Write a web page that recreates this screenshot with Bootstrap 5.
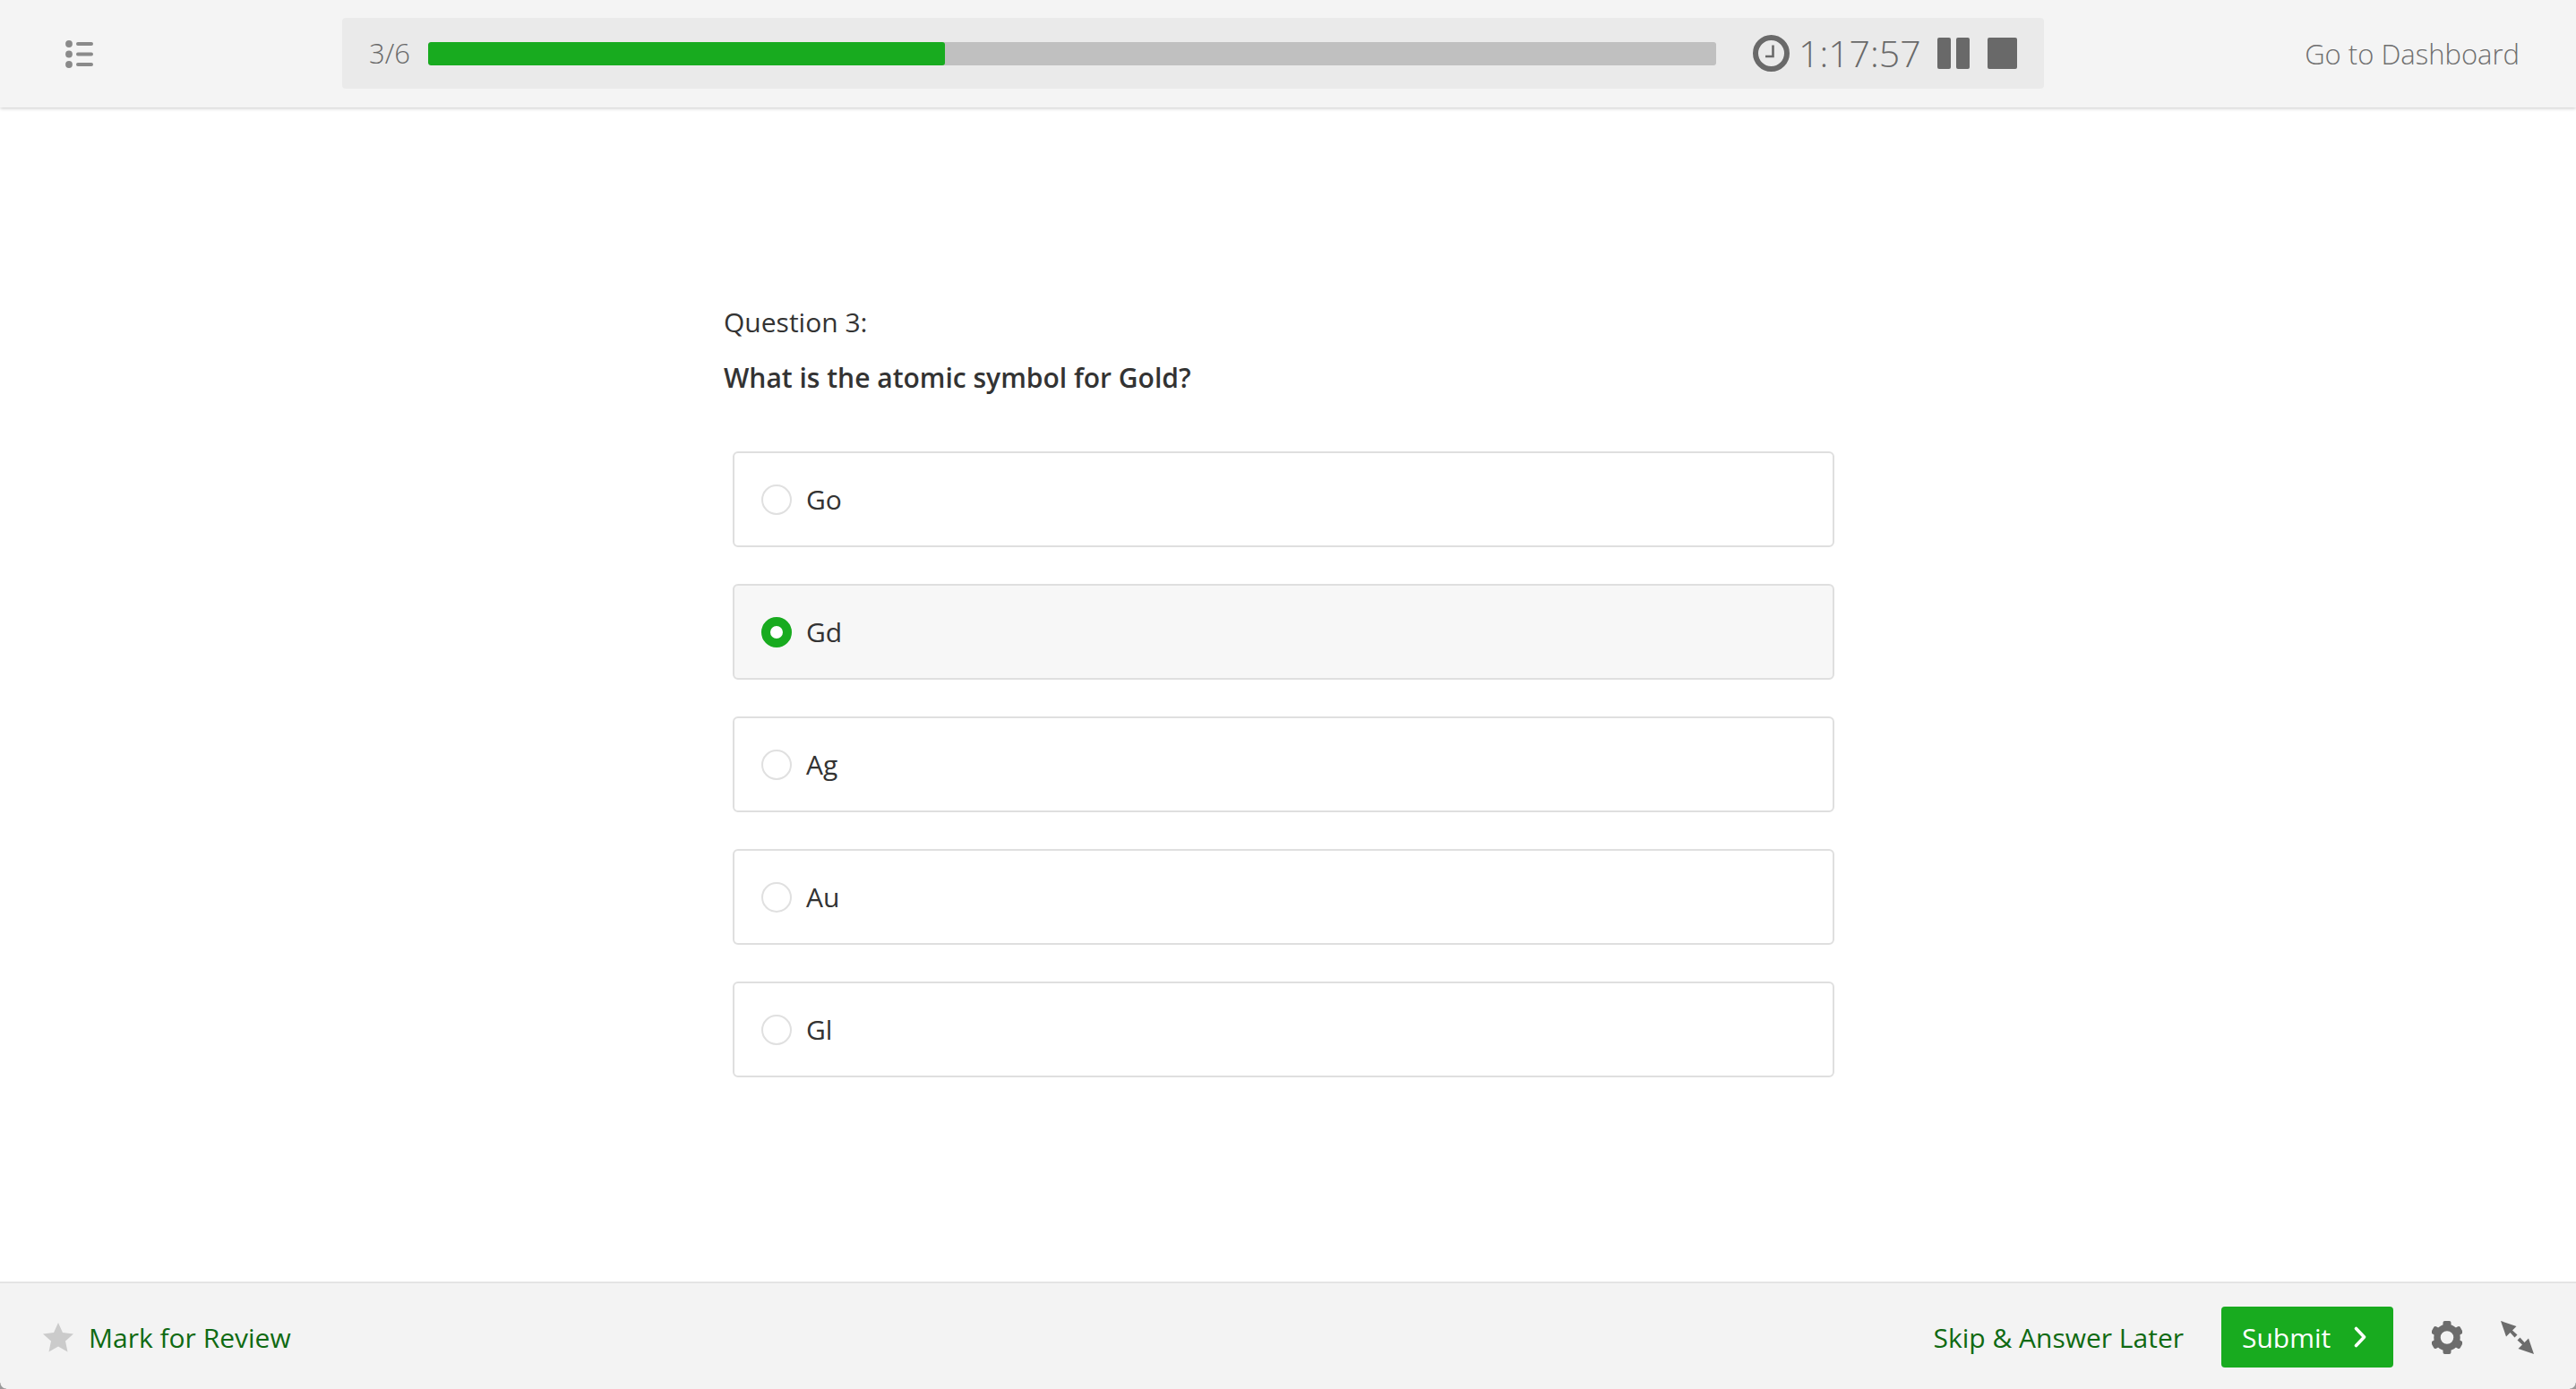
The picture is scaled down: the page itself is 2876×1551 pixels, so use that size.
<!DOCTYPE html>
<html lang="en"><head><meta charset="utf-8"><title>Quiz</title>
<link href="https://cdn.jsdelivr.net/npm/bootstrap@5.3.0/dist/css/bootstrap.min.css" rel="stylesheet">
<style>
html,body{height:100%;margin:0}
body{font-family:"Open Sans",sans-serif;color:#333;background:#fff;font-size:30px;overflow:hidden}
.shell{height:1551px}
.topbar{height:120px;background:#f4f4f4;box-shadow:0 1px 4px rgba(0,0,0,.22);padding:0 63px 0 73px;flex:none;position:relative}
.menu-ic{width:31px;height:31px;fill:#8a8a8a}
.stat-panel{position:absolute;left:382px;top:20px;width:1900px;height:79px;background:#eaeaea;border-radius:4px;padding:0 30px;color:#696969}
.count{font-size:31px;font-weight:300;width:66px;flex:none}
.track{width:1438px;height:26px;background:#c0c0c0;border-radius:3px;overflow:hidden;flex:none}
.fill{height:100%;background:#18ab1f;border-radius:3px}
.clock{width:41px;height:41px;margin-left:41px;flex:none}
.time{font-size:41px;font-weight:300;line-height:1;margin-left:10px;flex:none}
.pause{display:flex;gap:6px;margin-left:18px}
.pause i{display:block;width:15px;height:35px;background:#696969;border-radius:2px}
.stop{display:block;width:35px;height:35px;background:#696969;border-radius:2px;margin-left:20px}
.dash{font-size:31px;font-weight:300;color:#6f6f6f;text-decoration:none}
.content{flex:1 1 auto;padding:220px 0 0 808px}
.q-num{font-size:30px;line-height:40px;margin:0 0 21px;font-weight:400}
.q-text{font-size:30px;line-height:41px;margin:0 0 62px;font-weight:600}
.opts{width:1230px;margin-left:10px;display:flex;flex-direction:column;gap:41px}
.opt{height:107px;border:2px solid #dfdfdf;border-radius:6px;background:#fff;padding:0 0 0 30px;display:flex;align-items:center;gap:16px;font-size:30px}
.opt.sel{background:#f7f7f7}
.dot{width:34px;height:34px;border-radius:50%;border:2px solid #e0e0e0;background:#fff;flex:none}
.sel .dot{border:10px solid #18ab1f}
.footbar{height:120px;background:#f3f3f3;border-top:2px solid #e4e4e4;padding:2px 47px 0 48px;flex:none;position:relative}
.footbar::before,.footbar::after{content:"";position:absolute;bottom:0;width:7px;height:7px}
.footbar::before{left:0;background:radial-gradient(circle at 100% 0,transparent 6px,#9a9a9a 7px)}
.footbar::after{right:0;background:radial-gradient(circle at 0 0,transparent 6px,#9a9a9a 7px)}
.flink{font-size:30px;color:#0f6a12;text-decoration:none}
.star{width:34px;height:33px;fill:#cbcbcb;margin-right:17px}
.go{background:#18ab1f;color:#fff;border:0;border-radius:4px;height:68px;width:192px;font-size:30px;margin-left:42px;padding:0 0 0 23px}
.go:hover{background:#18ab1f;color:#fff}
.chev{margin-left:26px}
.gear{margin-left:43px;fill:#6c6c6c;flex:none}
.arrows{margin-left:43px;fill:#6c6c6c;flex:none}
</style></head>
<body>
<div class="shell d-flex flex-column">
<header class="topbar d-flex align-items-center justify-content-between">
<svg class="menu-ic" viewBox="0 0 31 31"><circle cx="4" cy="4" r="3.900"/><circle cx="4" cy="15.500" r="3.900"/><circle cx="4" cy="27" r="3.900"/><rect x="12" y="2" width="19" height="4" rx="2"/><rect x="12" y="13.500" width="19" height="4" rx="2"/><rect x="12" y="25" width="19" height="4" rx="2"/></svg>
<div class="stat-panel d-flex align-items-center">
<span class="count">3/6</span>
<div class="track"><div class="fill" style="width:40.1%"></div></div>
<svg class="clock" viewBox="0 0 41 41"><circle cx="20.500" cy="20.500" r="17.500" fill="none" stroke="#696969" stroke-width="6"/><path d="M22.500 11.500v12.500H14" fill="none" stroke="#696969" stroke-width="2.600"/></svg>
<span class="time">1:17:57</span>
<span class="pause"><i></i><i></i></span>
<span class="stop"></span>
</div>
<a class="dash" href="#">Go to Dashboard</a>
</header>
<main class="content">
<p class="q-num">Question 3:</p>
<p class="q-text">What is the atomic symbol for Gold?</p>
<div class="opts">
<div class="opt"><span class="dot"></span>Go</div>
<div class="opt sel"><span class="dot"></span>Gd</div>
<div class="opt"><span class="dot"></span>Ag</div>
<div class="opt"><span class="dot"></span>Au</div>
<div class="opt"><span class="dot"></span>Gl</div>
</div>
</main>
<footer class="footbar d-flex align-items-center justify-content-between">
<a class="flink d-flex align-items-center" href="#"><svg class="star" viewBox="0 0 34 33"><path d="M17 0l5 11 12 1.400-9 8.100 2.500 12L17 26.500 6.500 32.500 9 20.500 0 12.400 12 11z"/></svg>Mark for Review</a>
<div class="d-flex align-items-center">
<a class="flink" href="#">Skip &amp; Answer Later</a>
<button class="btn go d-inline-flex align-items-center">Submit<svg class="chev" width="14" height="24" viewBox="0 0 14 24"><path d="M2.500 2.500L11.500 12 2.500 21.500" fill="none" stroke="#fff" stroke-width="3.600" stroke-linecap="round" stroke-linejoin="round"/></svg></button>
<svg class="gear" width="34" height="37" viewBox="0 0 34 37"><circle cx="17" cy="18.500" r="11" fill="none" stroke="#6c6c6c" stroke-width="7.500"/><g><rect x="12.500" y="0" width="9" height="8" rx="2"/><rect x="12.500" y="0" width="9" height="8" rx="2" transform="rotate(60 17 18.500)"/><rect x="12.500" y="0" width="9" height="8" rx="2" transform="rotate(120 17 18.500)"/><rect x="12.500" y="0" width="9" height="8" rx="2" transform="rotate(180 17 18.500)"/><rect x="12.500" y="0" width="9" height="8" rx="2" transform="rotate(240 17 18.500)"/><rect x="12.500" y="0" width="9" height="8" rx="2" transform="rotate(300 17 18.500)"/></g></svg>
<svg class="arrows" width="37" height="37" viewBox="0 0 37 37"><path d="M0 0L17.500 6 13 10.500 18.500 15.500 15.500 18.500 10.500 13 6 17.500z"/><path d="M37 37L19.500 31 24 26.500 18.500 21.500 21.500 18.500 26.500 24 31 19.500z"/></svg>
</div>
</footer>
</div>
</body></html>
